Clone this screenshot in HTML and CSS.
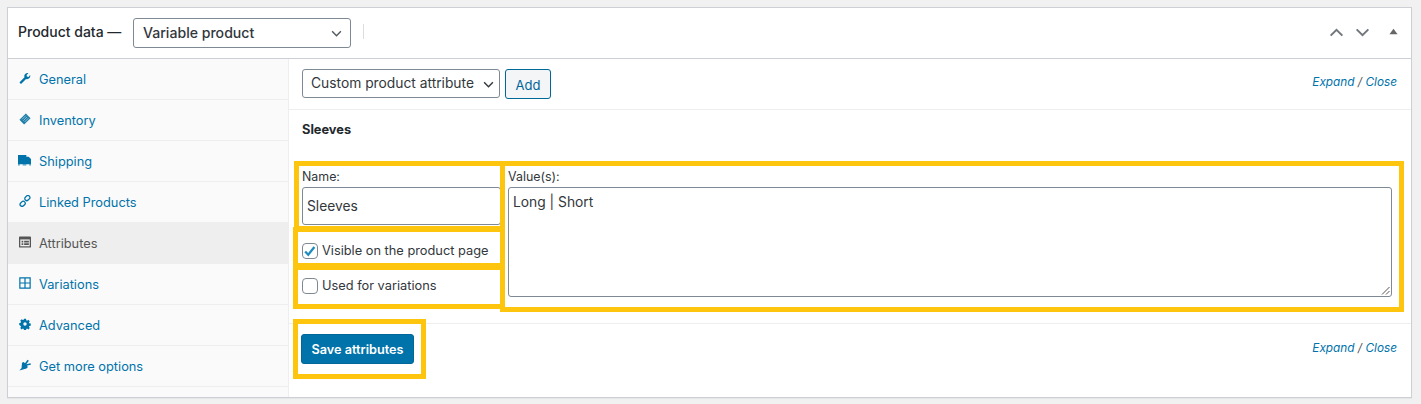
FILE: index.html
```html
<!DOCTYPE html>
<html lang="en">
<head>
<meta charset="utf-8">
<title>Product data</title>
<link rel="stylesheet" href="styles.css">
</head>
<body>
<div class="panel">
  <header class="head">
    <span class="head-title">Product data —</span>
    <div class="select type-select">Variable product
      <svg class="chev" viewBox="0 0 12 8"><path d="M1 1.500l5 5 5-5" fill="none" stroke="#50575e" stroke-width="1.600"/></svg>
    </div>
    <span class="head-sep"></span>
    <div class="head-actions">
      <svg class="arrow" viewBox="0 0 16 10"><path d="M1.500 8.500L8 2l6.500 6.500" fill="none" stroke="#72777c" stroke-width="2.200"/></svg>
      <svg class="arrow" viewBox="0 0 16 10"><path d="M1.500 1.500L8 8l6.500-6.500" fill="none" stroke="#72777c" stroke-width="2.200"/></svg>
      <svg class="tri" viewBox="0 0 10 7"><path d="M5 .5L9.500 6.500H.5z" fill="#666"/></svg>
    </div>
  </header>
  <div class="body">
    <nav class="tabs">
      <a class="tab"><svg class="ico" viewBox="0 0 14 14"><path d="M1 11.600L6.400 6.100C5.900 4.600 6.300 3 7.500 2c1-.8 2.400-1 3.500-.6L8.900 3.500l.3 1.800 1.800.4L13 3.600c.4 1.200.1 2.500-.8 3.500-1 1.100-2.600 1.500-4 1L3 13.300c-.6.500-1.300.400-1.800-.1-.5-.400-.6-1.100-.2-1.600z" fill="#0073aa"/></svg>General</a>
      <a class="tab"><svg class="ico" viewBox="0 0 14 14"><path d="M8 .5L13.500 6 6 13.500.5 8z" fill="#1f7ea8"/><path d="M3.500 7.500l4.500-4.500M5 9l4.500-4.500M6.500 10.500L11 6" stroke="#a9d0e2" stroke-width=".9"/></svg>Inventory</a>
      <a class="tab"><svg class="ico ico-wide" viewBox="0 0 14 14"><path d="M0 1h9v2h2.500L14 5.500V11H0z" fill="#0073aa"/><path d="M0 11h2v1.500H0zM5 11h4v1.500H5zM12 11h2v1.500h-2z" fill="#0073aa" opacity=".7"/></svg>Shipping</a>
      <a class="tab"><svg class="ico" viewBox="0 0 14 14"><g fill="none" stroke="#0073aa" stroke-width="1.500"><rect x="6.500" y="1.300" width="6.500" height="4.600" rx="2.300" transform="rotate(-45 9.700 3.600)"/><rect x="1" y="8" width="6.500" height="4.600" rx="2.300" transform="rotate(-45 4.300 10.300)"/></g></svg>Linked Products</a>
      <a class="tab active"><svg class="ico" viewBox="0 0 14 14"><path d="M1 .5h12a1 1 0 0 1 1 1v11a1 1 0 0 1-1 1H1a1 1 0 0 1-1-1v-11a1 1 0 0 1 1-1z" fill="#555"/><path d="M1.500 4h11v8h-11z" fill="#f0f0f0"/><path d="M3 5.500h2V7.500H3zM3 8.500h2v2H3zM6 5.500h5.500V7.500H6zM6 8.500h5.500v2H6z" fill="#555"/></svg>Attributes</a>
      <a class="tab"><svg class="ico" viewBox="0 0 14 14"><path d="M1 1h12v12H1zM7 1v12M1 7h12" fill="none" stroke="#0073aa" stroke-width="1.400"/></svg>Variations</a>
      <a class="tab"><svg class="ico" viewBox="0 0 14 14"><path fill-rule="evenodd" d="M5.800 1h2.400l.3 1.700 1 .4 1.400-1 1.700 1.700-1 1.400.4 1 1.700.3v2.400l-1.700.3-.4 1 1 1.400-1.700 1.700-1.400-1-1 .4-.3 1.700H5.800l-.3-1.700-1-.4-1.400 1-1.700-1.700 1-1.400-.4-1L.3 8.200V5.800L2 5.500l.4-1-1-1.400 1.700-1.700 1.400 1 1-.4zM7 5a2 2 0 1 0 0 4 2 2 0 0 0 0-4z" fill="#0073aa"/></svg>Advanced</a>
      <a class="tab"><svg class="ico" viewBox="0 0 14 14"><path d="M.5 13.500L3 10.500 3.500 4.500l2-1 1.500 1.500L10 .8l1.500 1.200L8.500 6l5-1 .3 1.700-4.300 1 .7 1.800-1.500 1.500z" fill="#0073aa"/></svg>Get more options</a>
    </nav>
    <main class="content">
      <div class="toolbar">
        <div class="select attr-select"><span class="select-text">Custom product attribute</span>
          <svg class="chev chev-sm" viewBox="0 0 12 8"><path d="M1 1.500l5 5 5-5" fill="none" stroke="#32373c" stroke-width="1.600"/></svg>
        </div>
        <button class="btn-add">Add</button>
        <span class="expand"><a>Expand</a> / <a>Close</a></span>
      </div>
      <section class="attr">
        <h3 class="attr-title">Sleeves</h3>
        <div class="attr-grid">
          <div class="attr-left">
            <label class="field-label">Name:</label>
            <div class="input">Sleeves</div>
            <div class="check-row first"><span class="check"><svg viewBox="0 0 16 16"><path d="M2.500 8.500l3.500 3.700 7-8.700" fill="none" stroke="#1e8cbe" stroke-width="2.600"/></svg></span>Visible on the product page</div>
            <div class="check-row"><span class="check"></span>Used for variations</div>
          </div>
          <div class="attr-right">
            <label class="field-label">Value(s):</label>
            <div class="textarea">Long | Short
              <svg class="grip" viewBox="0 0 9 9"><path d="M8.500 1L1 8.500M8.500 5L5 8.500" stroke="#555" stroke-width="1"/></svg>
            </div>
          </div>
        </div>
      </section>
      <div class="toolbar footer">
        <button class="btn-save">Save attributes</button>
        <span class="expand"><a>Expand</a> / <a>Close</a></span>
      </div>
    </main>
  </div>
</div>
<div class="mark mark-name"></div>
<div class="mark mark-value"></div>
<div class="mark mark-visible"></div>
<div class="mark mark-used"></div>
<div class="mark mark-save"></div>
</body>
</html>
```
FILE: styles.css
```css
* { box-sizing: border-box; }
html, body { margin: 0; height: 404px; overflow: hidden; }
body {
  background: #f1f1f1;
  padding: 7px 9px 6px 7px;
  font-family: Inter, "Liberation Sans", sans-serif;
  font-size: 12.800px;
  color: #32373c;
  position: relative;
}
.panel {
  height: 391px;
  background: #fff;
  border: 1px solid #ccd0d4;
  box-shadow: 0 1px 1px rgba(0,0,0,.04);
  display: flex;
  flex-direction: column;
}
.head {
  height: 51px;
  flex: none;
  border-bottom: 1px solid #ccd0d4;
  display: flex;
  align-items: center;
  padding: 0 13px 1px 10px;
}
.head-title { width: 115px; flex: none; font-size: 14px; font-weight: 500; color: #23282d; margin-top: -3px; white-space: nowrap; }
.select {
  position: relative;
  border: 1px solid #7e8993;
  border-radius: 3px;
  background: #fff;
  display: flex;
  align-items: center;
}
.type-select { width: 218px; height: 30px; padding-left: 9px; font-size: 14.100px; font-weight: 500; color: #32373c; }
.chev { position: absolute; right: 8px; top: 11px; width: 11px; height: 7px; }
.chev-sm { right: 5px; }
.head-sep { width: 1px; height: 15px; background: #ddd; margin-left: 12px; margin-top: -2px; }
.head-actions { margin-left: auto; display: flex; align-items: center; }
.arrow { width: 15px; height: 9px; margin-right: 11px; }
.tri { width: 9px; height: 7px; margin-top: -3px; margin-left: 8px; }
.body { flex: 1; display: flex; min-height: 0; }
.tabs {
  width: 281px;
  flex: none;
  background: #fafafa;
  border-right: 1px solid #eee;
}
.tab {
  height: 41px;
  display: flex;
  align-items: center;
  padding-left: 10px;
  border-bottom: 1px solid #eee;
  color: #0073aa;
  font-size: 12.800px;
}
.tab.active { background: #eee; color: #555; border-bottom-color: #eee; }
.ico { width: 12px; height: 12px; margin: -2px 8px 0 1px; flex: none; }
.ico-wide { width: 13px; height: 13px; margin: -2px 8px 0 0; }
.content { flex: 1; min-width: 0; display: flex; flex-direction: column; }
.toolbar {
  height: 51px;
  flex: none;
  display: flex;
  align-items: center;
  padding: 0 14px 1px 13px;
  border-bottom: 1px solid #eee;
}
.attr-select { width: 198px; height: 29px; padding-left: 8px; font-size: 13.800px; color: #32373c; }
.select-text { margin-top: -1px; }
.btn-add {
  margin-left: 5px;
  width: 46px;
  height: 30px;
  padding: 2px 0 0;
  border: 1px solid #006799;
  border-radius: 3px;
  background: #f3f5f6;
  color: #006799;
  font: inherit;
  font-size: 13px;
}
.expand { margin-left: auto; font-size: 11.800px; font-style: italic; color: #555; margin-top: -3px; }
.expand a { color: #0073aa; }
.attr { flex: 1; border-bottom: 1px solid #eee; padding: 0 19px 0 13px; }
.attr-title { margin: 0; height: 39px; display: flex; align-items: center; font-size: 12.800px; font-weight: 700; color: #23282d; }
.attr-grid { display: flex; gap: 8px; margin-top: 20px; }
.attr-left { width: 198px; flex: none; }
.attr-right { flex: 1; }
.field-label { display: block; height: 18px; line-height: 16px; font-size: 12.400px; color: #32373c; }
.input {
  width: 199px;
  height: 38px;
  border: 1px solid #7e8993;
  border-radius: 3px;
  display: flex;
  align-items: center;
  padding-left: 4px;
  font-size: 13.800px;
}
.check-row { height: 35px; display: flex; align-items: center; font-size: 12.800px; color: #32373c; }
.check-row.first { margin-top: 8px; }
.check {
  width: 16px;
  height: 16px;
  margin-right: 4px;
  border: 1px solid #7e8993;
  border-radius: 4px;
  background: #fff;
  flex: none;
}
.check svg { display: block; width: 14px; height: 14px; }
.textarea {
  position: relative;
  height: 110px;
  border: 1px solid #7e8993;
  border-radius: 3px;
  padding: 6px 4px;
  font-size: 13.800px;
  line-height: 16px;
}
.grip { position: absolute; right: 1px; bottom: 1px; width: 9px; height: 9px; }
.footer { border-bottom: 0; height: 73px; padding: 0 14px 23px 12px; }
.footer .expand { margin-top: -2px; }
.btn-save {
  width: 113px;
  height: 30px;
  padding: 0;
  border: 1px solid #006799;
  border-radius: 3px;
  background: #0073aa;
  color: #fff;
  font: inherit;
  font-size: 12.700px;
  font-weight: 600;
}
.mark { position: absolute; border: 5px solid #fec50f; pointer-events: none; }
.mark-name { left: 294px; top: 161px; width: 211px; height: 70px; }
.mark-value { left: 500px; top: 161px; width: 904px; height: 151px; }
.mark-visible { left: 293px; top: 227px; width: 212px; height: 41px; }
.mark-used { left: 293px; top: 265px; width: 212px; height: 44px; }
.mark-save { left: 293px; top: 319px; width: 133px; height: 60px; }
```
